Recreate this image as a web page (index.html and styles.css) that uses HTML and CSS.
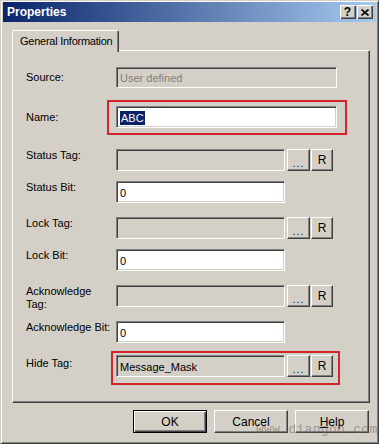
FILE: index.html
```html
<!DOCTYPE html>
<html lang="en">
<head>
    <meta charset="UTF-8">
    <title>Properties</title>
    <link rel="stylesheet" href="styles.css">
</head>
<body>
    <div class="window">
        <div class="titlebar">
            <span class="title">Properties</span>
            <div class="caption-buttons">
                <span class="cap-btn help-glyph">?</span>
                <span class="cap-btn">
                    <svg width="8" height="7" viewBox="0 0 8 7">
                        <path d="M0.5 0.5 L7.5 6.5 M7.5 0.5 L0.5 6.5" stroke="#000" stroke-width="1.6" fill="none"/>
                    </svg>
                </span>
            </div>
        </div>

        <div class="client">
            <div class="tabs">
                <div class="tab">General Information</div>
            </div>

            <div class="panel">
                <div class="row row-center">
                    <label class="label">Source:</label>
                    <div class="field field-wide disabled">User defined</div>
                </div>

                <div class="row row-center row-name">
                    <label class="label">Name:</label>
                    <div class="mark mark-name">
                        <div class="field field-wide white"><span class="selected">ABC</span></div>
                    </div>
                </div>

                <div class="row row-tag">
                    <label class="label">Status Tag:</label>
                    <div class="field-group">
                        <div class="field field-short"></div>
                        <button class="small-btn dots">...</button>
                        <button class="small-btn">R</button>
                    </div>
                </div>

                <div class="row">
                    <label class="label">Status Bit:</label>
                    <div class="field field-short white">0</div>
                </div>

                <div class="row row-tag">
                    <label class="label">Lock Tag:</label>
                    <div class="field-group">
                        <div class="field field-short"></div>
                        <button class="small-btn dots">...</button>
                        <button class="small-btn">R</button>
                    </div>
                </div>

                <div class="row">
                    <label class="label">Lock Bit:</label>
                    <div class="field field-short white">0</div>
                </div>

                <div class="row row-tag">
                    <label class="label">Acknowledge<br>Tag:</label>
                    <div class="field-group">
                        <div class="field field-short"></div>
                        <button class="small-btn dots">...</button>
                        <button class="small-btn">R</button>
                    </div>
                </div>

                <div class="row">
                    <label class="label">Acknowledge Bit:</label>
                    <div class="field field-short white">0</div>
                </div>

                <div class="row row-hide">
                    <label class="label">Hide Tag:</label>
                    <div class="mark mark-hide">
                        <div class="field-group">
                            <div class="field field-short">Message_Mask</div>
                            <button class="small-btn dots">...</button>
                            <button class="small-btn">R</button>
                        </div>
                    </div>
                </div>
            </div>

            <div class="actions">
                <button class="btn default">OK</button>
                <button class="btn">Cancel</button>
                <button class="btn"><u>H</u>elp</button>
            </div>
        </div>

        <span class="watermark">www.diangon.com</span>
    </div>
</body>
</html>
```

FILE: styles.css
```css
/* Global Styles */
* {
    margin: 0;
    padding: 0;
    box-sizing: border-box;
}

body {
    font-family: 'Liberation Sans', Arial, sans-serif;
    font-size: 11px;
    color: #000;
    background-color: #d4d0c8;
}

/* Window frame */
.window {
    position: relative;
    width: 379px;
    height: 444px;
    background-color: #d4d0c8;
    border: 1px solid;
    border-color: #d4d0c8 #404040 #404040 #d4d0c8;
    box-shadow: inset 1px 1px #fff, inset -1px -1px #808080;
    padding: 1px 2px 2px 2px;
}

.titlebar {
    display: flex;
    align-items: center;
    justify-content: space-between;
    height: 20px;
    padding: 0 3px 0 4px;
    background: linear-gradient(to right, #0a246a, #a6caf0);
}

.title {
    color: #fff;
    font-weight: bold;
    font-size: 12px;
}

.caption-buttons {
    display: flex;
    gap: 1px;
}

.cap-btn {
    display: flex;
    align-items: center;
    justify-content: center;
    width: 16px;
    height: 14px;
    background-color: #d4d0c8;
    box-shadow: inset 1px 1px #fff, inset -1px -1px #404040, inset -2px -2px #808080;
}

.help-glyph {
    font-weight: bold;
    font-size: 12px;
    line-height: 14px;
    padding-right: 1px;
}

/* Client area */
.client {
    padding: 8px 6px 0 9px;
}

.tabs {
    display: flex;
}

.tab {
    position: relative;
    z-index: 1;
    width: 107px;
    height: 22px;
    margin-bottom: -2px;
    padding: 3px 0 0 7px;
    line-height: 14px;
    letter-spacing: -0.25px;
    white-space: nowrap;
    background-color: #d4d0c8;
    border-top: 1px solid #fff;
    border-left: 1px solid #fff;
    border-right: 1px solid #404040;
    box-shadow: inset -1px 0 #808080;
    border-radius: 2px 2px 0 0;
}

.panel {
    height: 353px;
    padding: 16px 0 0 13px;
    border: 1px solid;
    border-color: #fff #404040 #404040 #fff;
    box-shadow: inset -1px -1px #808080;
}

/* Rows */
.row {
    display: flex;
    align-items: flex-start;
    margin-top: 10px;
}

.row:first-child {
    margin-top: 0;
}

.row-center {
    align-items: center;
}

.row-name {
    margin-top: 12px;
}

.row-tag {
    margin-top: 14px;
}

.row-hide {
    margin-top: 8px;
}

.label {
    width: 90px;
    flex-shrink: 0;
    line-height: 13px;
}

.row-hide .label {
    padding-top: 6px;
}

/* Sunken edit fields */
.field {
    height: 22px;
    padding: 4px 3px 0;
    line-height: 14px;
    background-color: #d4d0c8;
    border: 1px solid;
    border-color: #808080 #fff #fff #808080;
    box-shadow: inset 1px 1px #404040, inset -1px -1px #d4d0c8;
    white-space: nowrap;
}

.field.white {
    background-color: #fff;
}

.field.disabled {
    color: #808080;
    height: 21px;
    padding-top: 3px;
}

.field-wide {
    width: 221px;
}

.field-short {
    width: 169px;
}

.selected {
    background-color: #0a246a;
    color: #fff;
    padding: 1px 1px;
}

.field-group {
    display: flex;
    align-items: flex-start;
}

.small-btn {
    width: 22px;
    height: 22px;
    margin-left: 1px;
    font-family: 'Liberation Sans', Arial, sans-serif;
    font-size: 12px;
    background-color: #d4d0c8;
    border: 1px solid;
    border-color: #fff #404040 #404040 #fff;
    box-shadow: inset -1px -1px #808080;
}

.small-btn.dots {
    width: 23px;
    margin-left: 2px;
    font-size: 10px;
    padding-top: 6px;
    letter-spacing: 1px;
}

/* Red highlight boxes */
.mark {
    border: 2px solid #d3262b;
}

.mark-name {
    margin: 0 0 0 -9px;
    padding: 4px 8px 5px 7px;
}

.mark-hide {
    margin-left: -5px;
    padding: 2px 5px 6px 3px;
}

/* Bottom buttons */
.actions {
    display: flex;
    justify-content: flex-end;
    gap: 7px;
    margin-top: 7px;
    padding-right: 1px;
}

.btn {
    width: 74px;
    height: 23px;
    font-family: 'Liberation Sans', Arial, sans-serif;
    font-size: 12px;
    background-color: #d4d0c8;
    border: 1px solid;
    border-color: #fff #404040 #404040 #fff;
    box-shadow: inset -1px -1px #808080;
}

.btn.default {
    border: 1px solid #000;
    box-shadow: inset 1px 1px #fff, inset -1px -1px #404040, inset -2px -2px #808080;
}

.btn u {
    text-decoration: underline;
}

/* Watermark over the corner */
.watermark {
    position: absolute;
    left: 255px;
    top: 421px;
    font-family: 'Liberation Mono', 'Courier New', monospace;
    font-size: 13px;
    letter-spacing: 0.3px;
    color: rgba(100, 100, 100, 0.55);
}
```
